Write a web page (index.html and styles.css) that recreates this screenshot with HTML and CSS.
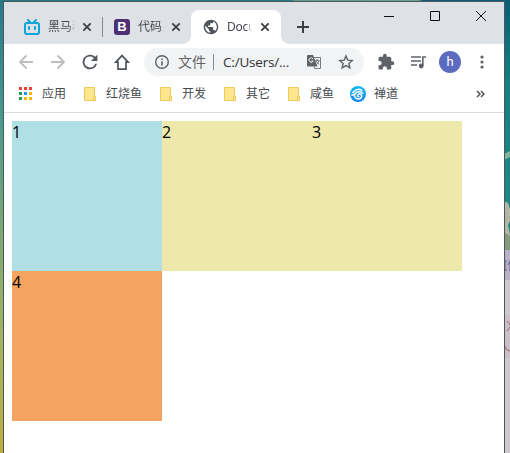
FILE: index.html
```html
<!DOCTYPE html>
<html lang="zh-CN">
<head>
<meta charset="utf-8">
<title>Document</title>
<link rel="stylesheet" href="styles.css">
</head>
<body>
<div class="desktop">
  <svg class="wallpaper" width="510" height="453" viewBox="0 0 510 453">
    <defs>
      <linearGradient id="left" x1="0" y1="0" x2="0" y2="1"><stop offset="0" stop-color="#237a8b"/><stop offset=".25" stop-color="#49978e"/><stop offset=".5" stop-color="#7ba775"/><stop offset=".75" stop-color="#a2b563"/><stop offset="1" stop-color="#bfae3b"/></linearGradient>
      <linearGradient id="top"><stop offset="0" stop-color="#28798a"/><stop offset=".57" stop-color="#217d8b"/><stop offset=".58" stop-color="#679d91"/><stop offset=".82" stop-color="#719f90"/><stop offset=".83" stop-color="#0d5875"/><stop offset="1" stop-color="#0c6078"/></linearGradient>
      <linearGradient id="right" x1="0" y1="0" x2="0" y2="1"><stop offset="0" stop-color="#0c5d76"/><stop offset=".35" stop-color="#188083"/><stop offset="1" stop-color="#248986"/></linearGradient>
    </defs>
    <path fill="url(#left)" d="M0 0h4v453H0z"/>
    <path fill="url(#top)" d="M0 0h510v2H0z"/>
    <path fill="url(#right)" d="M504 0h6v250h-6z"/>
    <path fill="#83b59e" d="M504 154l6-3v6l-6 3z"/>
    <path fill="#b4b6a4" d="M504 201l4 2 2 6v12l-2 4 2 9v16h-6z"/>
    <path fill="#849b7d" d="M504 232l6 4v14h-6z"/>
    <path fill="#b8b0c7" d="M504 250h6v30h-6z"/>
    <path fill="#cdc9cd" d="M504 280h6v173h-6z"/>
    <path fill="#cbbfc8" d="M504 315h6v43h-6z"/>
    <path fill="none" stroke="#636094" d="M504 261h3m-2 0v9m-1 0h3m1-5l2-4v10"/>
    <path fill="none" stroke="#9b6568" d="M507 321l3 4m0 2l-3 4m-3 14l3 5 3 1"/>
  </svg>
  <main class="window">
    <header class="tabs">
      <div class="tab first">
        <svg width="16" height="16" viewBox="0 0 16 16" fill="none" stroke="#0ba4db" stroke-width="2" stroke-linecap="round"><rect x="1" y="4" width="14" height="11" rx="2"/><path d="M4 1l2 2m6-2l-2 2M5 8v2m6-2v2"/></svg>
        <span class="title">黑马程序</span>
        <svg class="close" width="10" height="10" viewBox="0 0 10 10"><path d="M1.3 1.3l7.4 7.4m0-7.4L1.3 8.7"/></svg>
      </div>
      <div class="tab second">
        <span class="bootstrap">B</span>
        <span class="title">代码库</span>
        <svg class="close" width="10" height="10" viewBox="0 0 10 10"><path d="M1.3 1.3l7.4 7.4m0-7.4L1.3 8.7"/></svg>
      </div>
      <div class="tab active">
        <svg width="16" height="16" viewBox="1 1 22 22"><path fill="#50555b" d="M12 2C6.480 2 2 6.480 2 12s4.480 10 10 10 10-4.480 10-10S17.520 2 12 2zm-1 17.930c-3.950-.49-7-3.850-7-7.930 0-.62.08-1.210.21-1.790L9 15v1c0 1.100.9 2 2 2v1.930zm6.900-2.540c-.26-.81-1-1.390-1.900-1.390h-1v-3c0-.55-.45-1-1-1H8v-2h2c.55 0 1-.45 1-1V7h2c1.100 0 2-.9 2-2v-.41c2.930 1.190 5 4.060 5 7.410 0 2.080-.8 3.970-2.100 5.390z"/></svg>
        <span class="title">Document</span>
        <svg class="close" width="10" height="10" viewBox="0 0 10 10"><path d="M1.3 1.3l7.4 7.4m0-7.4L1.3 8.7"/></svg>
      </div>
      <svg class="plus" width="14" height="14" viewBox="0 0 14 14"><path d="M7 1v12M1 7h12" stroke="#3c4043" stroke-width="2"/></svg>
      <div class="controls">
        <svg width="12" height="12"><path d="M1 6.5h10"/></svg>
        <svg width="12" height="12"><path d="M1.5 1.5h9v9h-9z"/></svg>
        <svg width="12" height="12"><path d="M1 1l10 10M11 1L1 11"/></svg>
      </div>
    </header>
    <nav class="toolbar">
      <span class="slot"><svg class="muted" width="24" height="24" viewBox="0 0 24 24"><path d="M19 12H6m6.500-6.500L6 12l6.500 6.500"/></svg></span>
      <span class="slot"><svg class="muted" width="24" height="24" viewBox="0 0 24 24"><path d="M5 12h13m-6.500-6.500L18 12l-6.500 6.500"/></svg></span>
      <span class="slot"><svg width="22" height="22" viewBox="0 0 24 24" fill="#50555b"><path d="M17.65 6.35A8 8 0 1 0 19.73 14h-2.08A6 6 0 1 1 12 6c1.66 0 3.14.69 4.22 1.78L13 11h7V4z"/></svg></span>
      <span class="slot"><svg width="18" height="18" viewBox="0 0 18 18" fill="none" stroke="#50555b" stroke-width="1.700"><path d="M2.800 9.200H5v6.900h8V9.200h2.200L9 2.600z"/></svg></span>
      <div class="address">
        <svg class="info" width="16" height="16" viewBox="0 0 16 16"><circle cx="8" cy="8" r="6.3" fill="none" stroke="#5f6368" stroke-width="1.4"/><path d="M7.2 4.4h1.6V6H7.2zm0 2.8h1.6v4.4H7.2z" fill="#5f6368"/></svg>
        <span class="scheme">文件</span>
        <span class="url">C:/Users/...</span>
        <svg class="translate" width="16" height="16" viewBox="0 0 16 16"><path fill="#5f6368" d="M2 1h5l1 2.5 3.5 9H2a1 1 0 0 1-1-1V2a1 1 0 0 1 1-1z"/><path fill="none" stroke="#777b80" d="M8 3.5h6.5v11H8.7l-.8-2M8.6 6.5h5M11 5v1.500M9.500 6.500l3.500 4m-.2-4c-.2 2-1.200 3.500-2.800 4.500"/><path fill="none" stroke="#eef0f2" d="M7 4.800a2.200 2.200 0 1 0 .2 2.200H5.300"/></svg>
        <svg width="16" height="16" viewBox="0 0 16 16"><path fill="none" stroke="#5f6368" stroke-width="1.400" d="M8 1.900l1.750 4.200 4.500.4-3.400 3 1 4.400L8 11.600l-3.850 2.300 1-4.400-3.400-3 4.500-.4z"/></svg>
      </div>
      <span class="slot"><svg width="18" height="18" viewBox="0 0 24 24" fill="#5f6368"><path d="M20.500 11H19V7a2 2 0 0 0-2-2h-4V3.500a2.500 2.500 0 0 0-5 0V5H4a2 2 0 0 0-2 2v3.800h1.500a2.700 2.700 0 0 1 0 5.400H2V20a2 2 0 0 0 2 2h3.800v-1.500a2.700 2.700 0 0 1 5.400 0V22H17a2 2 0 0 0 2-2v-4h1.500a2.500 2.500 0 0 0 0-5z"/></svg></span>
      <span class="slot"><svg width="18" height="18" viewBox="0 0 18 18"><path fill="none" stroke="#5f6368" stroke-width="1.600" d="M2 4h10M2 8h10M2 12h6M13.800 13V4H17"/><circle cx="12.200" cy="13" r="2.400" fill="#5f6368"/></svg></span>
      <span class="slot"><span class="avatar">h</span></span>
      <span class="slot"><svg width="4" height="14" fill="#5f6368"><circle cx="2" cy="2" r="1.600"/><circle cx="2" cy="7" r="1.600"/><circle cx="2" cy="12" r="1.600"/></svg></span>
    </nav>
    <nav class="bookmarks">
      <a class="apps"><svg width="13" height="13" viewBox="0 0 13 13"><path fill="#ea4335" d="M0 0h3v3H0zm5 0h3v3H5zm5 0h3v3h-3z"/><path fill="#259b57" d="M0 5h3v3H0zm0 5h3v3H0z"/><path fill="#2196f3" d="M5 5h3v3H5z"/><path fill="#fbb60b" d="M10 5h3v3h-3zm-5 5h3v3H5zm5 0h3v3h-3z"/></svg>应用</a>
      <a><svg width="12" height="14" viewBox="0 0 12 14"><path fill="#ffe68f" stroke="#edca55" d="M.5.500h10v9h1v4H.500zM9.500 13V9.500h1"/></svg>红烧鱼</a>
      <a><svg width="12" height="14" viewBox="0 0 12 14"><path fill="#ffe68f" stroke="#edca55" d="M.5.500h10v9h1v4H.500zM9.500 13V9.500h1"/></svg>开发</a>
      <a><svg width="12" height="14" viewBox="0 0 12 14"><path fill="#ffe68f" stroke="#edca55" d="M.5.500h10v9h1v4H.500zM9.500 13V9.500h1"/></svg>其它</a>
      <a><svg width="12" height="14" viewBox="0 0 12 14"><path fill="#ffe68f" stroke="#edca55" d="M.5.500h10v9h1v4H.500zM9.500 13V9.500h1"/></svg>咸鱼</a>
      <a class="zen"><svg width="16" height="16" viewBox="0 0 16 16"><defs><linearGradient id="sky" x1="0" y1="0" x2="0" y2="1"><stop offset="0" stop-color="#11b8fa"/><stop offset="1" stop-color="#1485ee"/></linearGradient></defs><circle cx="8" cy="8" r="8" fill="url(#sky)"/><path fill="none" stroke="#fff" stroke-width="1.500" stroke-linecap="round" d="M2.500 6.500C4 6.500 4.500 3.500 8.500 3.300c1.500 0 2.500.4 3.500 1.200M2 9c1 .4 1.800-.2 2.500-1M12.800 7.300C11.500 5.200 7 5 5.300 7.500 3.600 10 5.200 13 8.200 13c2.900 0 4.300-2.600 3-4.300-1.200-1.500-3.800-.8-3.600 1 .1.700.6 1 1.300.8"/></svg>禅道</a>
      <svg class="more" width="9" height="8" viewBox="0 0 9 8"><path fill="none" stroke="#50555b" stroke-width="1.500" d="M1 1l3 3-3 3m4-6l3 3-3 3"/></svg>
    </nav>
    <section class="page">
      <div class="box blue">1</div><div class="box khaki">2</div><div class="box khaki">3</div><div class="box orange">4</div>
    </section>
  </main>
</div>
</body>
</html>
```
FILE: styles.css
```css
* { box-sizing: border-box; }
body { margin: 0; overflow: hidden; font-family: "Noto Sans", "Noto Sans CJK SC", sans-serif; }
svg { display: block; flex: none; }
.desktop { position: relative; width: 510px; height: 453px; padding: 1px 5px 0 3px; }
.wallpaper { position: absolute; inset: 0; z-index: -1; }
.window { height: 452px; border: 1px solid #4b575b; border-bottom: 0; background: #fff; }
.tabs { display: flex; height: 42px; background: #dee1e6; padding-top: 8px; }
.tab { display: flex; align-items: center; height: 34px; font-size: 12px; color: #45494d; }
.tab .title { width: 27px; margin-left: 8px; overflow: hidden; white-space: nowrap; line-height: 20px; -webkit-mask-image: linear-gradient(90deg, #000 75%, transparent); mask-image: linear-gradient(90deg, #000 75%, transparent); }
.close { margin-left: 7px; fill: none; stroke: #3c4043; stroke-width: 1.8; }
.first { width: 99px; padding-left: 20px; background: linear-gradient(#85888c, #85888c) 98px 7px / 1px 20px no-repeat; }
.second { width: 88px; padding-left: 11px; }
.second .title { -webkit-mask-image: linear-gradient(90deg, #000 85%, transparent 95%); mask-image: linear-gradient(90deg, #000 85%, transparent 95%); width: 26px; }
.second .close { margin-left: 7px; }
.bootstrap { width: 16px; height: 16px; border-radius: 3px; background: #4b3073; color: #fff; font: bold 13px/16px "Liberation Sans", sans-serif; text-align: center; }
.active { position: relative; width: 90px; padding-left: 12px; background: #fff; border-radius: 8px 8px 0 0; }
.active::before, .active::after { content: ""; position: absolute; bottom: 0; width: 8px; height: 8px; }
.active::before { left: -8px; background: radial-gradient(circle at 0 0, transparent 7.5px, #fff 8px); }
.active::after { right: -8px; background: radial-gradient(circle at 100% 0, transparent 7.5px, #fff 8px); }
.active .title { width: 25px; letter-spacing: -.3px; }
.active .close { margin-left: 8px; }
.plus { margin: 10px 0 0 15px; }
.controls { display: flex; margin: -8px 0 0 auto; height: 28px; }
.controls svg { margin: 8px 17px; fill: none; stroke: #111; }
.toolbar { display: flex; align-items: center; height: 36px; padding-left: 6px; }
.slot { display: flex; width: 32px; height: 32px; align-items: center; justify-content: center; }
.muted { fill: none; stroke: #bbbdbf; stroke-width: 1.8; }
.address { display: flex; align-items: center; width: 220px; height: 28px; margin: 0 6px; padding-left: 10px; border-radius: 14px; background: #f1f3f4; font-size: 14px; color: #5f6368; }
.scheme { width: 36px; margin-left: 8px; line-height: 16px; border-right: 1px solid #85898d; }
.url { width: 70px; margin-left: 9px; color: #303236; white-space: nowrap; font-family: "Open Sans", sans-serif; font-size: 13.5px; letter-spacing: -.2px; }
.translate { margin: 0 24px 0 13px; }
.address > svg:last-child { margin-left: -8px; }
.avatar { width: 22px; height: 22px; border-radius: 50%; background: #5c6bc0; color: #fff; font: 13px/22px Roboto, sans-serif; text-align: center; }
.bookmarks { display: flex; align-items: center; height: 33px; padding: 0 19px 5px 15px; border-bottom: 1px solid #dadce0; color: #45494d; font-size: 12px; }
.bookmarks a { display: flex; align-items: center; gap: 10px; margin-right: 18px; line-height: 18px; white-space: nowrap; }
.bookmarks .zen { gap: 8px; margin-left: -2px; }
.more { margin-left: auto; }
.page { display: grid; grid-template-columns: repeat(3, 150px); padding: 8px; font: 16px/22px "Open Sans", sans-serif; color: #000; }
.box { height: 150px; }
.blue { background: #b0e0e6; }
.khaki { background: #eee8aa; }
.orange { background: #f4a460; }
```
